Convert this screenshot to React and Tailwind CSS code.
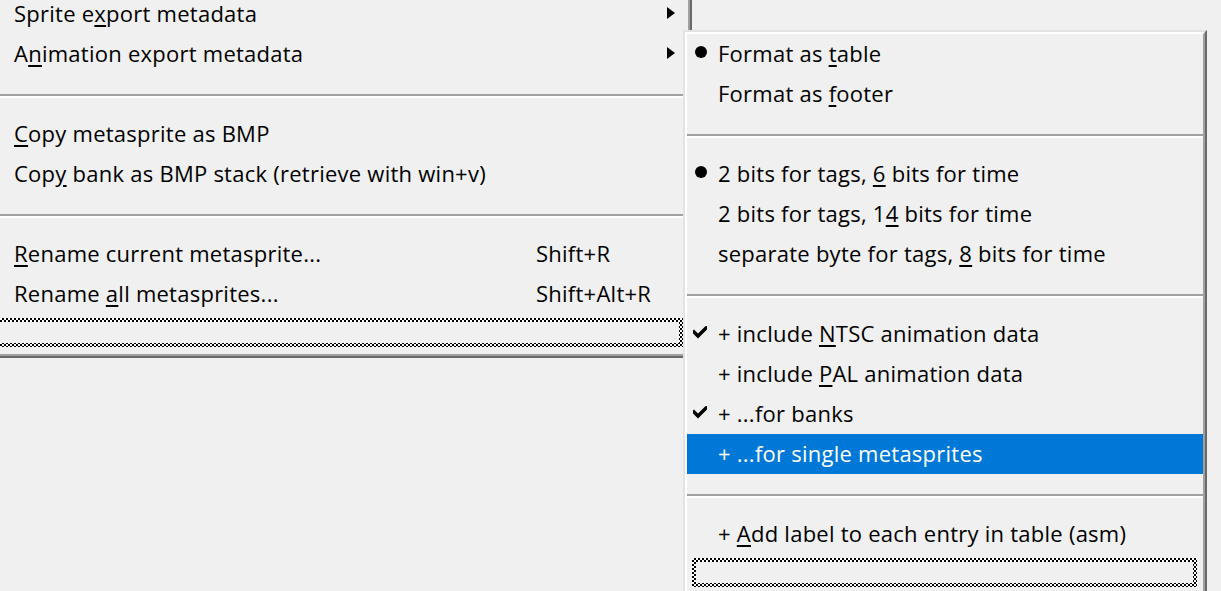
import React from "react";

// "&" marks the mnemonic letter, as in a Win32 menu resource
function Label({ text }) {
  const i = text.indexOf("&");
  if (i < 0) return <span>{text}</span>;
  return (
    <span>
      {text.slice(0, i)}
      <span className="underline decoration-2 underline-offset-[3px]">{text[i + 1]}</span>
      {text.slice(i + 2)}
    </span>
  );
}

function Arrow() {
  return (
    <svg width="8" height="12" viewBox="0 0 8 12" className="block">
      <polygon points="0,0 8,6 0,12" fill="#000" />
    </svg>
  );
}

function Bullet() {
  return (
    <svg width="12" height="12" viewBox="0 0 12 12" className="block">
      <circle cx="6" cy="6" r="6" fill="#000" />
    </svg>
  );
}

function Check() {
  return (
    <svg width="14" height="13" viewBox="0 0 14 13" className="block">
      <path d="M1 6 L5 10 L13 2" fill="none" stroke="#000" strokeWidth="3.4" strokeLinecap="square" />
    </svg>
  );
}

function Separator() {
  return (
    <div className="h-[40px] pt-[20px]">
      <div className="h-[2px] bg-[#a0a0a0]" />
      <div className="h-[2px] bg-white" />
    </div>
  );
}

// checkered focus rectangle of an empty owner-drawn item
function FocusRow({ className, inner }) {
  return (
    <div className={"h-[40px] pt-[4px] " + className}>
      <div className={"h-[29px] bg-[image:repeating-conic-gradient(#000_0_25%,#fff_0_50%)] bg-[length:4px_4px] " + inner}>
        <div className="h-full bg-[#f0f0f0]" />
      </div>
    </div>
  );
}

const leftItems = [
  { label: "Sprite e&xport metadata", arrow: true },
  { label: "A&nimation export metadata", arrow: true },
  { sep: true },
  { label: "&Copy metasprite as BMP" },
  { label: "Cop&y bank as BMP stack (retrieve with win+v)" },
  { sep: true },
  { label: "&Rename current metasprite...", key: "Shift+R" },
  { label: "Rename &all metasprites...", key: "Shift+Alt+R" },
];

const subItems = [
  { label: "Format as &table", mark: "bullet" },
  { label: "Format as &footer" },
  { sep: true },
  { label: "2 bits for tags, &6 bits for time", mark: "bullet" },
  { label: "2 bits for tags, 1&4 bits for time" },
  { label: "separate byte for tags, &8 bits for time" },
  { sep: true },
  { label: "+ include &NTSC animation data", mark: "check" },
  { label: "+ include &PAL animation data" },
  { label: "+ ...for banks", mark: "check" },
  { label: "+ ...for single metasprites", active: true },
  { sep: true },
  { label: "+ &Add label to each entry in table (asm)" },
];

export default function App() {
  return (
    <div className="relative h-[591px] w-[1221px] overflow-hidden bg-[#f0f0f0] font-['Open_Sans','Noto_Sans',sans-serif] text-[22px] tracking-[0.25px] text-black">
      {/* parent menu, its top and left edges are off screen */}
      <div className="-mt-[6px] w-[692px] border-r-2 border-b-2 border-[#696969]">
        <div className="border-r-2 border-b-2 border-[#a0a0a0]">
          {leftItems.map((it, i) =>
            it.sep ? (
              <Separator key={i} />
            ) : (
              <div key={i} className="flex h-[40px] items-center pb-[2px] pl-[14px] pr-[13px]">
                <div className="w-[522px] shrink-0 whitespace-nowrap">
                  <Label text={it.label} />
                </div>
                {it.key && <div className="whitespace-nowrap">{it.key}</div>}
                {it.arrow && (
                  <div className="ml-auto">
                    <Arrow />
                  </div>
                )}
              </div>
            )
          )}
          <FocusRow className="pr-[5px]" inner="py-[4px] pr-[4px]" />
        </div>
      </div>

      {/* submenu popup */}
      <div className="absolute left-[683px] top-[30px] w-[524px] border-2 border-t-[#e3e3e3] border-l-[#e3e3e3] border-r-[#696969] border-b-[#696969] bg-[#f0f0f0]">
        <div className="border-2 border-t-white border-l-white border-r-[#a0a0a0] border-b-[#a0a0a0]">
          {subItems.map((it, i) =>
            it.sep ? (
              <Separator key={i} />
            ) : (
              <div
                key={i}
                className={
                  "flex h-[40px] items-center whitespace-nowrap pb-[2px] " +
                  (it.active ? "bg-[#0078d7] text-white" : "")
                }
              >
                <div className="flex w-[31px] shrink-0 items-center">
                  {it.mark === "bullet" && (
                    <div className="ml-[8px] -mt-[2px]">
                      <Bullet />
                    </div>
                  )}
                  {it.mark === "check" && (
                    <div className="ml-[6px] -mt-[1px]">
                      <Check />
                    </div>
                  )}
                </div>
                <Label text={it.label} />
              </div>
            )
          )}
          <FocusRow className="pl-[5px] pr-[6px]" inner="p-[4px]" />
        </div>
      </div>
    </div>
  );
}
